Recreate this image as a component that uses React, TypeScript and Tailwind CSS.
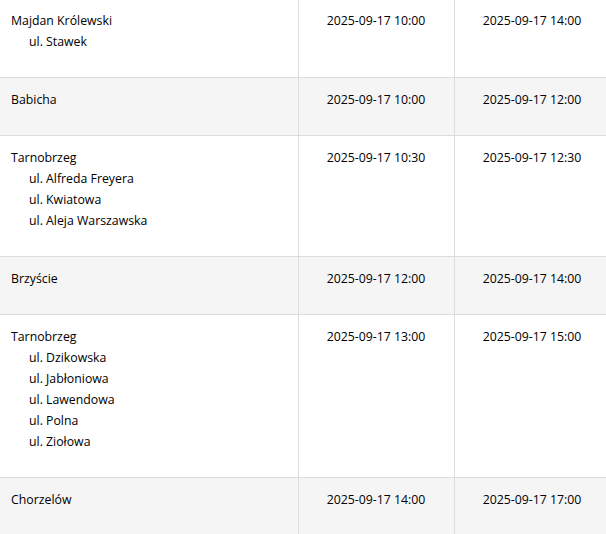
type Row = { place: string; streets?: string[]; from: string; to: string };

const rows: Row[] = [
  { place: "Majdan Królewski", streets: ["ul. Stawek"], from: "2025-09-17 10:00", to: "2025-09-17 14:00" },
  { place: "Babicha", from: "2025-09-17 10:00", to: "2025-09-17 12:00" },
  {
    place: "Tarnobrzeg",
    streets: ["ul. Alfreda Freyera", "ul. Kwiatowa", "ul. Aleja Warszawska"],
    from: "2025-09-17 10:30",
    to: "2025-09-17 12:30",
  },
  { place: "Brzyście", from: "2025-09-17 12:00", to: "2025-09-17 14:00" },
  {
    place: "Tarnobrzeg",
    streets: ["ul. Dzikowska", "ul. Jabłoniowa", "ul. Lawendowa", "ul. Polna", "ul. Ziołowa"],
    from: "2025-09-17 13:00",
    to: "2025-09-17 15:00",
  },
  { place: "Chorzelów", from: "2025-09-17 14:00", to: "2025-09-17 17:00" },
];

export default function App() {
  return (
    <div className="w-[606px] h-[534px] overflow-hidden bg-white text-[12.3px] leading-[21px] text-black font-['Open_Sans',sans-serif]">
      <table className="w-[610px] border-collapse table-fixed">
        <colgroup>
          <col className="w-[298px]" />
          <col className="w-[156px]" />
          <col className="w-[156px]" />
        </colgroup>
        <tbody>
          {rows.map((r, i) => (
            <tr key={i} className={i % 2 === 1 ? "bg-[#f5f5f5]" : "bg-white"}>
              <td className={`align-top border-b border-[#dcdcdc] pl-[11px] pb-[25px] ${i === 0 ? "pt-[10px]" : "pt-[11px]"}`}>
                <div>{r.place}</div>
                {r.streets?.map((s) => (
                  <div key={s} className="pl-[18px]">
                    {s}
                  </div>
                ))}
              </td>
              <td className={`align-top text-center border-b border-l border-[#dcdcdc] ${i === 0 ? "pt-[10px]" : "pt-[11px]"}`}>
                {r.from}
              </td>
              <td className={`align-top text-center border-b border-l border-r border-[#dcdcdc] ${i === 0 ? "pt-[10px]" : "pt-[11px]"}`}>
                {r.to}
              </td>
            </tr>
          ))}
        </tbody>
      </table>
    </div>
  );
}
